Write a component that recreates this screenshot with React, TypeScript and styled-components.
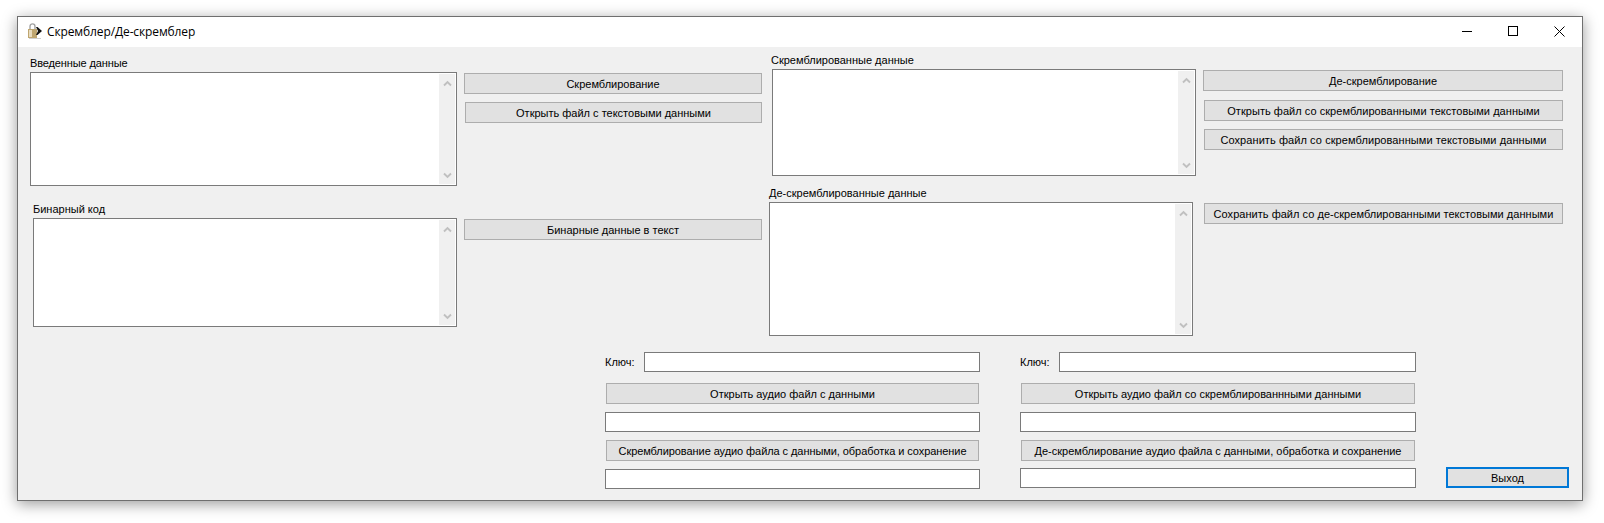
import styled, { createGlobalStyle } from 'styled-components';

const GlobalStyle = createGlobalStyle`
   html {
      overflow: hidden;
   }
   body {
      margin: 0;
      background: #ffffff;
   }
   * {
      box-sizing: border-box;
   }
`;

const PageStyled = styled.div`
   height: 523px;
   padding: 16px 0 0 17px;
`;

const WindowStyled = styled.div`
   display: flex;
   flex-direction: column;
   width: 1566px;
   height: 485px;
   border: 1px solid #6f6f6f;
   background: #f0f0f0;
   box-shadow: 0 3px 14px rgba(0, 0, 0, 0.4);
   font-family: 'Liberation Sans', Arial, sans-serif;
   font-size: 11px;
   color: #000000;
`;

const TitleBar = styled.div`
   display: flex;
   align-items: center;
   height: 30px;
   flex-shrink: 0;
   padding-left: 10px;
   background: #ffffff;
`;

const TitleText = styled.span`
   margin-left: 3px;
   font-family: 'Open Sans', sans-serif;
   font-size: 12px;
   letter-spacing: -0.12px;
   line-height: 16px;
`;

const TitleControls = styled.div`
   display: flex;
   margin-left: auto;
`;

const TitleControl = styled.div`
   display: flex;
   align-items: center;
   justify-content: center;
   width: 46px;
   height: 30px;
   padding-bottom: 2px;
`;

const Client = styled.div`
   display: flex;
   flex-direction: column;
   padding-left: 12px;
`;

const TopArea = styled.div`
   display: flex;
   gap: 7px;
   align-items: flex-start;
`;

const Column = styled.div<{ $width: number; $top?: number }>`
   display: flex;
   flex-direction: column;
   align-items: flex-end;
   width: ${({ $width }) => $width}px;
   padding-top: ${({ $top }) => $top ?? 0}px;
`;

const Caption = styled.label<{ $left?: number; $top?: number; $tracking?: number }>`
   align-self: flex-start;
   height: 14px;
   line-height: 14px;
   white-space: nowrap;
   letter-spacing: ${({ $tracking }) => $tracking ?? 0}px;
   margin: ${({ $top }) => $top ?? 0}px 0 2px ${({ $left }) => $left ?? 0}px;
`;

const MemoBox = styled.div<{ $width: number; $height: number; $left?: number }>`
   display: flex;
   justify-content: flex-end;
   align-self: flex-start;
   width: ${({ $width }) => $width}px;
   height: ${({ $height }) => $height}px;
   margin-left: ${({ $left }) => $left ?? 0}px;
   padding: 1px;
   border: 1px solid #7a7a7a;
   background: #ffffff;
`;

const ScrollTrack = styled.div`
   display: flex;
   flex-direction: column;
   justify-content: space-between;
   width: 16px;
   background: #f0f0f0;
`;

const ScrollArrow = styled.div`
   display: flex;
   align-items: center;
   justify-content: center;
   height: 18px;
`;

const ActionButton = styled.button<{ $width: number; $top?: number; $tracking?: number }>`
   display: block;
   width: ${({ $width }) => $width}px;
   height: 21px;
   flex-shrink: 0;
   margin: ${({ $top }) => $top ?? 0}px 0 0;
   padding: 0;
   border: 1px solid #adadad;
   background: #e1e1e1;
   font: inherit;
   letter-spacing: ${({ $tracking }) => $tracking ?? 0}px;
   color: inherit;
   white-space: nowrap;
`;

const ExitButton = styled(ActionButton)`
   border: 2px solid #0078d7;
   align-self: flex-end;
   margin-bottom: 1px;
`;

const BottomArea = styled.div`
   display: flex;
   margin: 16px 0 0 575px;
`;

const AudioColumn = styled.div<{ $width: number; $gap: number }>`
   display: flex;
   flex-direction: column;
   align-items: center;
   width: ${({ $width }) => $width}px;
   margin-right: ${({ $gap }) => $gap}px;
`;

const KeyRow = styled.div`
   display: flex;
   align-items: center;
   justify-content: space-between;
   width: 100%;
`;

const KeyLabel = styled.label`
   line-height: 14px;
`;

const FieldInput = styled.input<{ $width?: number; $top?: number }>`
   display: block;
   width: ${({ $width }) => ($width ? `${$width}px` : '100%')};
   height: 20px;
   margin: ${({ $top }) => $top ?? 0}px 0 0;
   padding: 0;
   border: 1px solid #7a7a7a;
   border-radius: 0;
   background: #ffffff;
   outline: none;
`;

const AppIcon = styled.svg`
   flex-shrink: 0;
   margin-bottom: 2px;
`;

const ChevronUp = () => (
   <svg width='9' height='7' viewBox='0 0 9 7' aria-hidden='true'>
      <path d='M1 5.5 L4.5 2 L8 5.5' fill='none' stroke='#c0c0c0' strokeWidth='1.9' />
   </svg>
);

const ChevronDown = () => (
   <svg width='9' height='7' viewBox='0 0 9 7' aria-hidden='true'>
      <path d='M1 1.5 L4.5 5 L8 1.5' fill='none' stroke='#c0c0c0' strokeWidth='1.9' />
   </svg>
);

interface IMemo {
   width: number;
   height: number;
   left?: number;
}

const Memo = ({ width, height, left }: IMemo) => (
   <MemoBox $width={width} $height={height} $left={left}>
      <ScrollTrack>
         <ScrollArrow>
            <ChevronUp />
         </ScrollArrow>
         <ScrollArrow>
            <ChevronDown />
         </ScrollArrow>
      </ScrollTrack>
   </MemoBox>
);

const LockIcon = () => (
   <AppIcon width='16' height='16' viewBox='0 0 16 16' aria-hidden='true'>
      <path d='M2 7 V3.5 C2 0 7 0 7 3.5 V7' fill='none' stroke='#a3a3a3' strokeWidth='1.4' />
      <rect x='0' y='6' width='9' height='9' fill='#bfa670' />
      <rect x='1' y='7' width='3' height='7' fill='#e8dcc0' />
      <rect x='1' y='15' width='12' height='1' fill='#cfcfcf' />
      <path d='M8 4 H9.5 L14 8 L9.5 12 H8 L10 8 Z' fill='#111111' />
   </AppIcon>
);

const MinimizeIcon = () => (
   <svg width='10' height='10' viewBox='0 0 10 10' aria-hidden='true'>
      <path d='M0 5.5 H10' stroke='#000' strokeWidth='1' />
   </svg>
);

const MaximizeIcon = () => (
   <svg width='10' height='10' viewBox='0 0 10 10' aria-hidden='true'>
      <rect x='0.5' y='0.5' width='9' height='9' fill='none' stroke='#000' strokeWidth='1' />
   </svg>
);

const CloseIcon = () => (
   <svg width='11' height='11' viewBox='0 0 11 11' aria-hidden='true'>
      <path d='M0.5 0.5 L10.5 10.5 M10.5 0.5 L0.5 10.5' stroke='#000' strokeWidth='1' />
   </svg>
);

const App = () => (
   <PageStyled>
      <GlobalStyle />
      <WindowStyled>
         <TitleBar>
            <LockIcon />
            <TitleText>Скремблер/Де-скремблер</TitleText>
            <TitleControls>
               <TitleControl>
                  <MinimizeIcon />
               </TitleControl>
               <TitleControl>
                  <MaximizeIcon />
               </TitleControl>
               <TitleControl>
                  <CloseIcon />
               </TitleControl>
            </TitleControls>
         </TitleBar>
         <Client>
            <TopArea>
               <Column $width={427} $top={9}>
                  <Caption $tracking={-0.12}>Введенные данные</Caption>
                  <Memo width={427} height={114} />
                  <Caption $left={3} $top={16}>
                     Бинарный код
                  </Caption>
                  <Memo width={424} height={109} left={3} />
               </Column>
               <Column $width={298} $top={26}>
                  <ActionButton $width={298}>Скремблирование</ActionButton>
                  <ActionButton $width={297} $top={8}>
                     Открыть файл с текстовыми данными
                  </ActionButton>
                  <ActionButton $width={298} $top={96}>
                     Бинарные данные в текст
                  </ActionButton>
               </Column>
               <Column $width={427} $top={6}>
                  <Caption $left={2}>Скремблированные данные</Caption>
                  <Memo width={424} height={107} left={3} />
                  <Caption $top={10}>Де-скремблированные данные</Caption>
                  <Memo width={424} height={134} />
               </Column>
               <Column $width={360} $top={23}>
                  <ActionButton $width={360}>Де-скремблирование</ActionButton>
                  <ActionButton $width={359} $top={9} $tracking={0.04}>
                     Открыть файл со скремблированными текстовыми данными
                  </ActionButton>
                  <ActionButton $width={359} $top={8} $tracking={0.08}>
                     Сохранить файл со скремблированными текстовыми данными
                  </ActionButton>
                  <ActionButton $width={359} $top={53} $tracking={0.03}>
                     Сохранить файл со де-скремблированными текстовыми данными
                  </ActionButton>
               </Column>
            </TopArea>
            <BottomArea>
               <AudioColumn $width={375} $gap={40}>
                  <KeyRow>
                     <KeyLabel>Ключ:</KeyLabel>
                     <FieldInput $width={336} />
                  </KeyRow>
                  <ActionButton $width={373} $top={11}>
                     Открыть аудио файл с данными
                  </ActionButton>
                  <FieldInput $top={8} />
                  <ActionButton $width={373} $top={8} $tracking={-0.07}>
                     Скремблирование аудио файла с данными, обработка и сохранение
                  </ActionButton>
                  <FieldInput $top={8} />
               </AudioColumn>
               <AudioColumn $width={396} $gap={30}>
                  <KeyRow>
                     <KeyLabel>Ключ:</KeyLabel>
                     <FieldInput $width={357} />
                  </KeyRow>
                  <ActionButton $width={394} $top={11}>
                     Открыть аудио файл со скремблированнными данными
                  </ActionButton>
                  <FieldInput $top={8} />
                  <ActionButton $width={394} $top={8}>
                     Де-скремблирование аудио файла с данными, обработка и сохранение
                  </ActionButton>
                  <FieldInput $top={7} />
               </AudioColumn>
               <ExitButton $width={123}>Выход</ExitButton>
            </BottomArea>
         </Client>
      </WindowStyled>
   </PageStyled>
);

export default App;
